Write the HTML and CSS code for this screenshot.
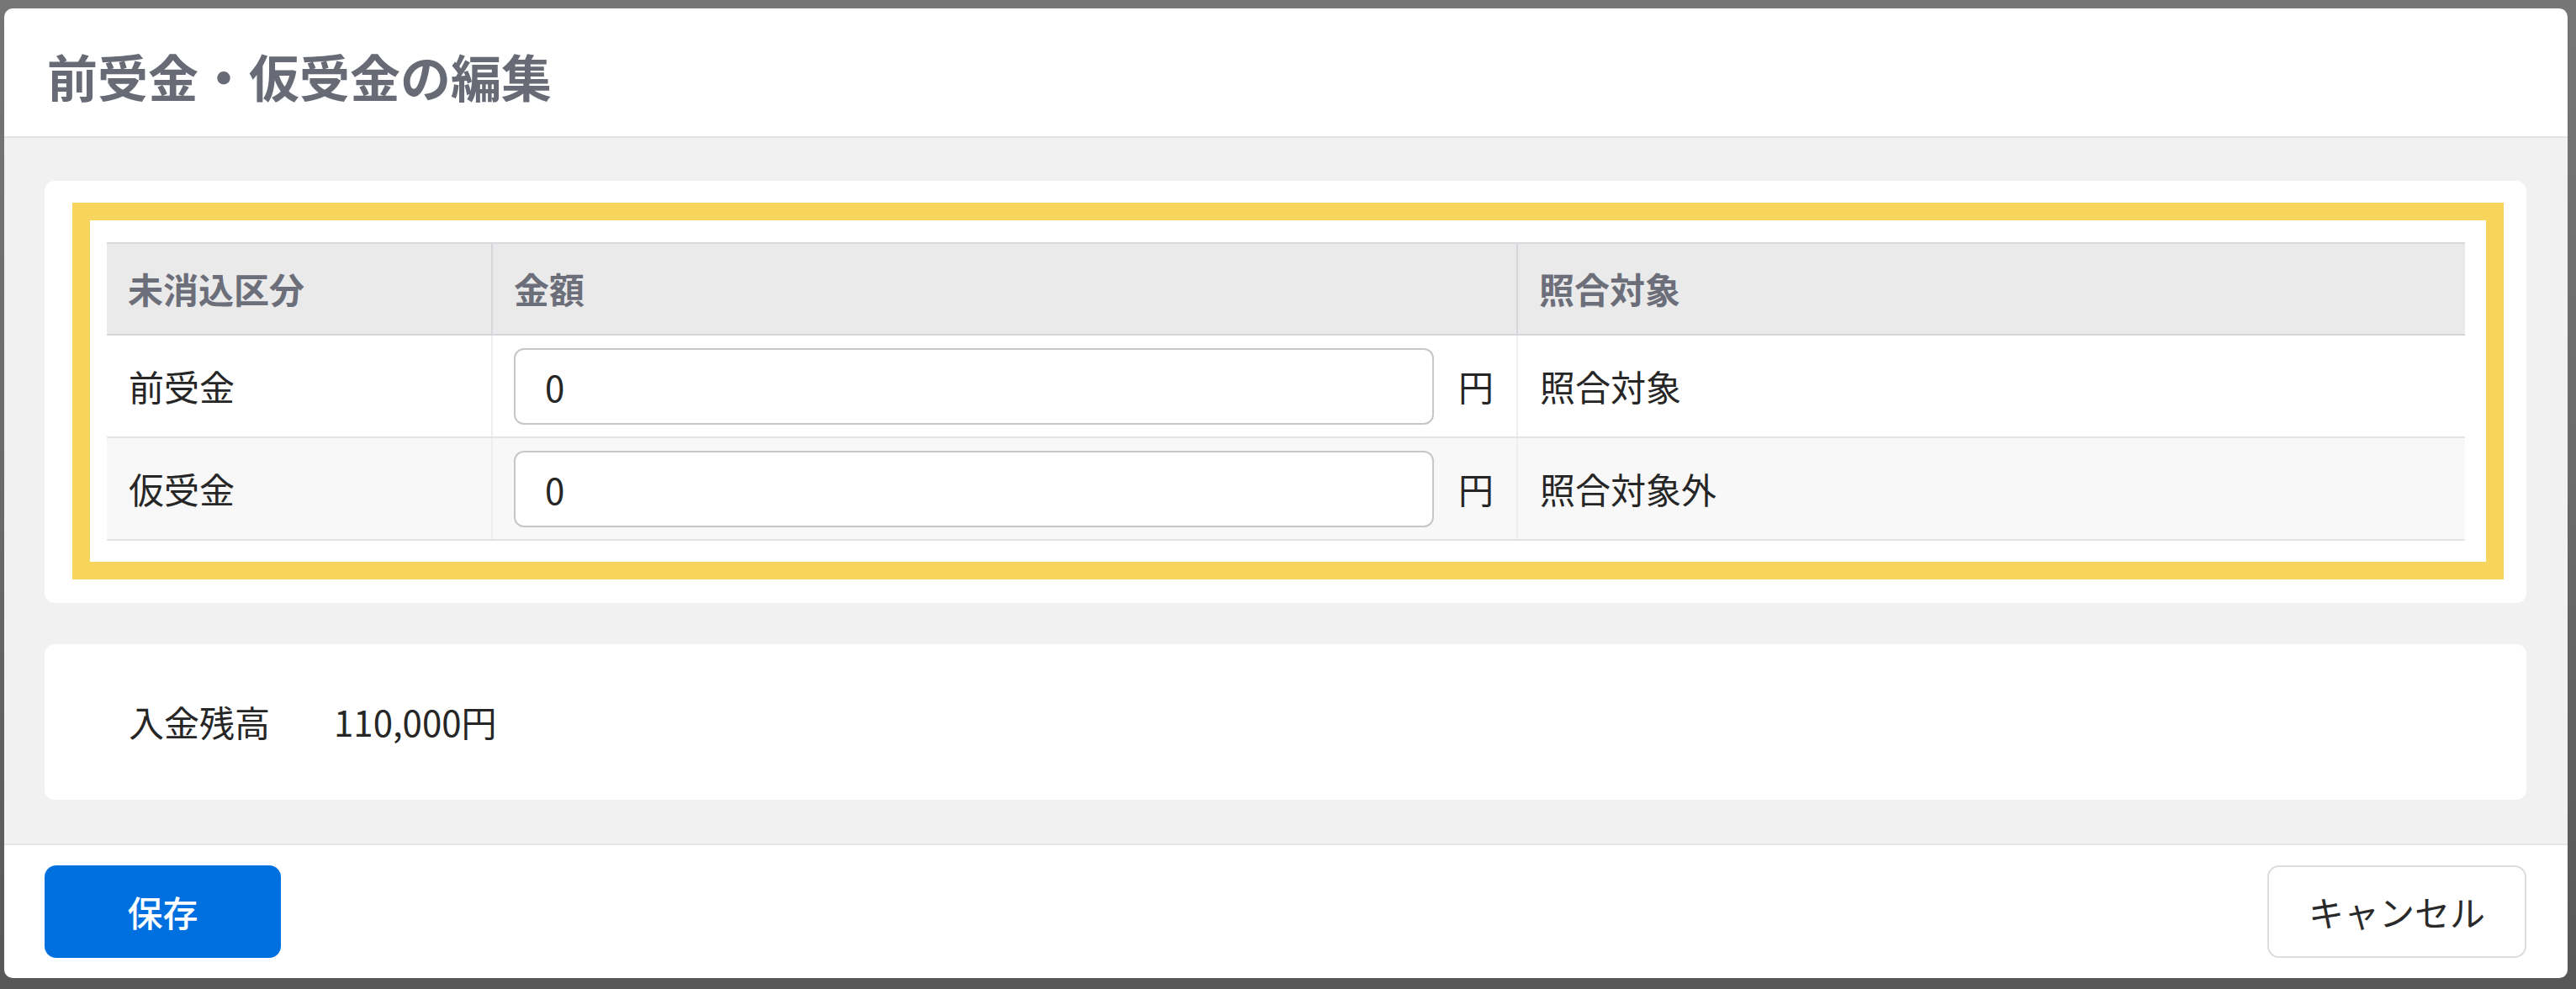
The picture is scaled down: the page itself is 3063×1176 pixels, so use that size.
FILE: index.html
```html
<!DOCTYPE html>
<html lang="ja">
<head>
<meta charset="utf-8">
<title>前受金・仮受金の編集</title>
<link rel="stylesheet" href="styles.css">
</head>
<body>
<div class="dialog">
  <header class="dlg-header">
    <h1 class="dlg-title">前受金・仮受金の編集</h1>
  </header>
  <main class="dlg-body">
    <section class="card card-table">
      <div class="highlight">
        <div class="tbl">
          <div class="tr th-row">
            <div class="cell">未消込区分</div>
            <div class="cell">金額</div>
            <div class="cell">照合対象</div>
          </div>
          <div class="tr td-row">
            <div class="cell">前受金</div>
            <div class="cell amount"><input class="num-input" type="text" value="0"><span class="yen">円</span></div>
            <div class="cell">照合対象</div>
          </div>
          <div class="tr td-row alt">
            <div class="cell">仮受金</div>
            <div class="cell amount"><input class="num-input" type="text" value="0"><span class="yen">円</span></div>
            <div class="cell">照合対象外</div>
          </div>
        </div>
      </div>
    </section>
    <section class="card card-balance">
      <span class="bal-label">入金残高</span>
      <span class="bal-value">110,000円</span>
    </section>
  </main>
  <footer class="dlg-footer">
    <button class="btn btn-primary" type="button">保存</button>
    <button class="btn btn-secondary" type="button">キャンセル</button>
  </footer>
</div>
</body>
</html>
```

FILE: styles.css
```css
* { box-sizing: border-box; }

html, body {
  margin: 0;
  height: 1176px;
  overflow: hidden;
}

body {
  background: linear-gradient(to bottom, #767676 0%, #6a6a6a 50%, #575757 100%);
  padding: 10px 10px 13px 5px;
  font-family: "Noto Sans CJK JP", "Noto Sans", sans-serif;
  color: #262626;
}

.dialog {
  width: 3048px;
  height: 1153px;
  background: #ffffff;
  border-radius: 10px;
  overflow: hidden;
  display: flex;
  flex-direction: column;
}

.dlg-header {
  height: 154px;
  flex: none;
  border-bottom: 2px solid #e3e3e5;
  display: flex;
  align-items: center;
  padding: 8px 0 0 51px;
}

.dlg-title {
  margin: 0;
  font-size: 60px;
  line-height: 1;
  font-weight: 700;
  color: #686b76;
}

.dlg-body {
  flex: 1;
  background: #f1f1f1;
  padding: 51px 49px 52px 48px;
  display: flex;
  flex-direction: column;
  gap: 49px;
}

.card {
  background: #ffffff;
  border-radius: 12px;
}

.card-table {
  padding: 26px 27px 28px 33px;
}

.highlight {
  border: 21px solid #f7d55c;
  padding: 26px 25px 25px 20px;
}

.tbl {
  font-size: 42px;
  line-height: 1.2;
}

.tr {
  display: grid;
  grid-template-columns: 457px 1219px 1fr;
}

.th-row {
  height: 111px;
  background: #eaeaea;
  border-top: 2px solid #d9d9dd;
  border-bottom: 2px solid #d4d4d9;
  font-weight: 700;
  color: #6c6f7a;
}

.th-row .cell {
  padding-left: 25px;
}

.th-row .cell + .cell {
  border-left: 2px solid #d6d6db;
}

.cell {
  display: flex;
  align-items: center;
  padding-left: 26px;
}

.td-row {
  height: 122px;
  background: #ffffff;
  border-bottom: 2px solid #e3e3e5;
  color: #262626;
}

.td-row.alt {
  background: #f8f8f8;
}

.td-row .cell + .cell {
  border-left: 2px solid #eeeef0;
}

.cell.amount {
  padding: 0 27px 0 25px;
  gap: 29px;
}

.num-input {
  flex: 1;
  min-width: 0;
  height: 91px;
  border: 2px solid #c7c7c9;
  border-radius: 12px;
  background: #ffffff;
  padding: 0 0 0 35px;
  font-family: "Noto Sans CJK JP", "Noto Sans", sans-serif;
  font-size: 42px;
  color: #262626;
  outline: none;
}

.yen {
  flex: none;
}

.card-balance {
  height: 185px;
  display: flex;
  align-items: center;
  padding-left: 100px;
  font-size: 42px;
  line-height: 1.2;
  color: #262626;
}

.bal-value {
  margin-left: 76px;
}

.dlg-footer {
  flex: none;
  height: 160px;
  border-top: 2px solid #e4e4e6;
  padding: 0 49px 0 48px;
  display: flex;
  align-items: center;
  justify-content: space-between;
}

.btn {
  height: 110px;
  border-radius: 14px;
  font-family: "Noto Sans CJK JP", "Noto Sans", sans-serif;
  font-size: 42px;
  line-height: 1;
  cursor: pointer;
}

.btn-primary {
  width: 281px;
  background: #0070e0;
  border: none;
  color: #ffffff;
  font-weight: 500;
}

.btn-secondary {
  width: 308px;
  background: #ffffff;
  border: 2px solid #dcdcde;
  color: #2a2a2a;
}
```
